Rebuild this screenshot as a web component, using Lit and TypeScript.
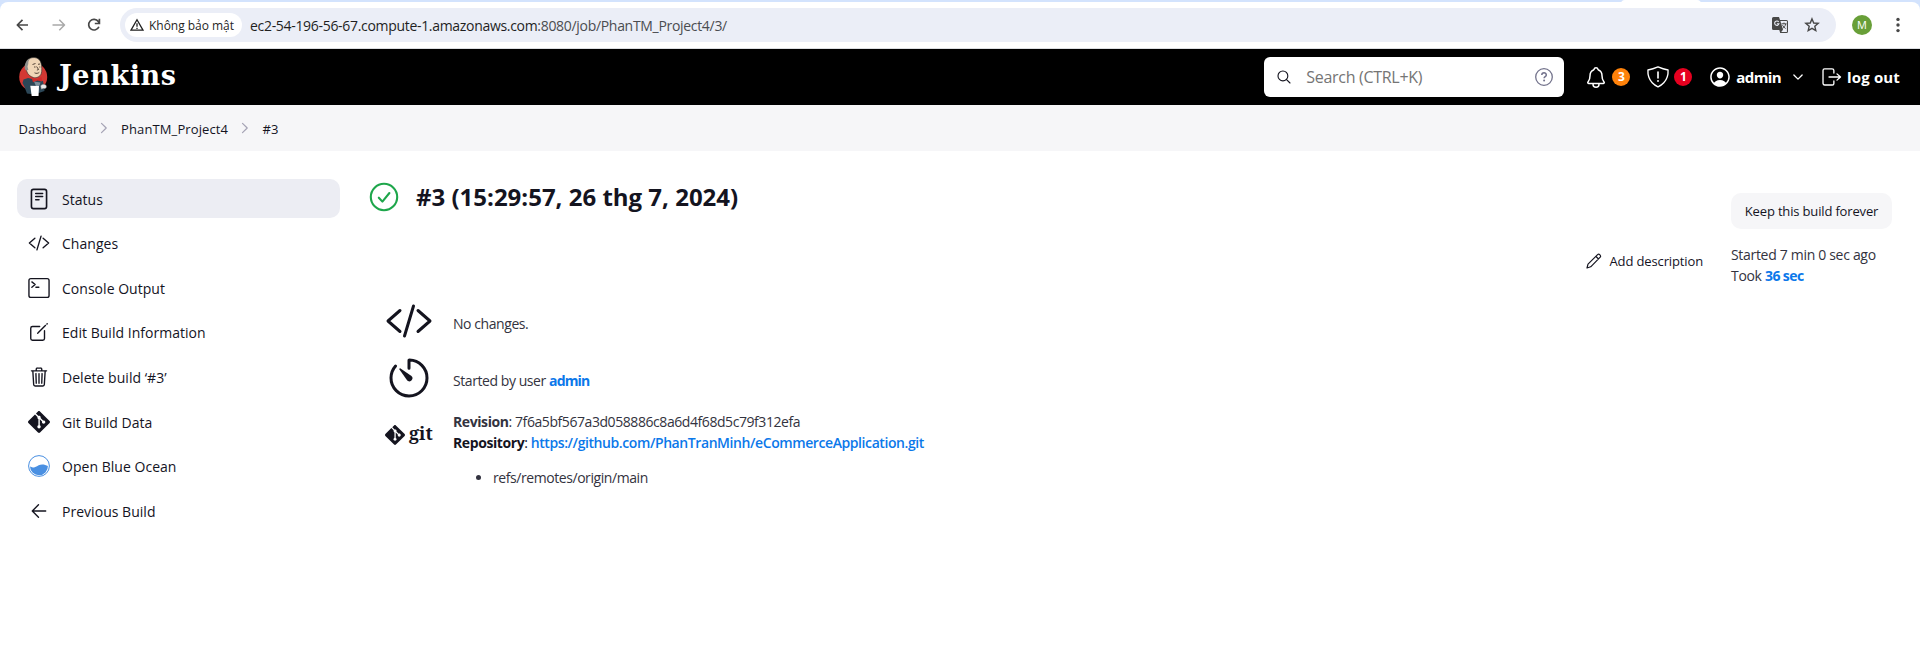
import { LitElement, html, css, svg, type TemplateResult } from "lit";
import { customElement } from "lit/decorators.js";
import { classMap } from "lit/directives/class-map.js";

const line = (body: TemplateResult, width = 32) => svg`
  <g fill="none" stroke="currentColor" stroke-width=${width} stroke-linecap="round" stroke-linejoin="round">${body}</g>`;

const ion = (cls: string, body: unknown) =>
  html`<svg class=${cls} viewBox="0 0 512 512">${body}</svg>`;

const slash = svg`<path d="M160 368L32 256l128-112M352 368l128-112-128-112M304 96l-96 320"/>`;
const gitMark = svg`<path fill="currentColor" d="M23.546 10.93L13.067.452c-.604-.603-1.582-.603-2.188 0L8.708 2.627l2.76 2.76c.645-.215 1.379-.07 1.889.441.516.515.658 1.258.438 1.9l2.658 2.66c.645-.223 1.387-.078 1.9.435.721.72.721 1.884 0 2.604-.719.719-1.881.719-2.6 0-.539-.541-.674-1.337-.404-1.996L12.86 8.955v6.525c.176.086.342.203.488.348.713.721.713 1.883 0 2.6-.719.721-1.889.721-2.609 0-.719-.719-.719-1.879 0-2.598.182-.18.387-.316.605-.406V8.835c-.217-.091-.424-.222-.6-.401-.545-.545-.676-1.342-.396-2.009L7.636 3.7.45 10.881c-.6.605-.6 1.584 0 2.189l10.48 10.477c.604.604 1.582.604 2.186 0l10.43-10.43c.605-.603.605-1.582 0-2.187"/>`;

const tasks: { label: string; icon: TemplateResult; active?: boolean }[] = [
  {
    label: "Status",
    active: true,
    icon: ion("ti", line(svg`<rect x="80" y="32" width="352" height="448" rx="48" stroke-width="38"/><path d="M180 128h160M180 200h160M180 272h76" stroke-width="36"/>`)),
  },
  { label: "Changes", icon: ion("ti", line(slash)) },
  {
    label: "Console Output",
    icon: ion("ti", line(svg`<rect x="22" y="38" width="468" height="436" rx="44"/><path d="M90 114l76 62-76 62M184 238h68"/>`)),
  },
  {
    label: "Edit Build Information",
    icon: ion("ti", svg`${line(svg`<path d="M384 224v184a40 40 0 01-40 40H104a40 40 0 01-40-40V168a40 40 0 0140-40h167.48"/>`)}<path fill="currentColor" d="M459.94 53.25a16.06 16.06 0 00-23.22-.56L424.35 65a8 8 0 000 11.31l11.34 11.32a8 8 0 0011.34 0l12.06-12c6.1-6.09 6.67-16.01.85-22.38zM399.34 90L218.82 270.2a9 9 0 00-2.31 3.93L208.16 299a3.91 3.91 0 004.86 4.86l24.85-8.35a9 9 0 003.93-2.31L422 112.66a9 9 0 000-12.66l-9.95-10a9 9 0 00-12.71 0z"/>`),
  },
  {
    label: "Delete build ‘#3’",
    icon: ion("ti", line(svg`<path d="M112 112l20 320c.95 18.49 14.4 32 32 32h184c17.67 0 30.87-13.51 32-32l20-320M80 112h352M192 112V72a23.93 23.93 0 0124-24h80a23.93 23.93 0 0124 24v40M256 176v224M184 176l8 224M328 176l-8 224"/>`)),
  },
  { label: "Git Build Data", icon: html`<svg class="ti" viewBox="0 0 24 24">${gitMark}</svg>` },
  {
    label: "Open Blue Ocean",
    icon: html`<svg class="ti" viewBox="0 0 22 22"><circle cx="11" cy="11" r="10.4" fill="#fff" stroke="#4a90e2" stroke-width="1"/><path fill="#4a90e2" d="M2 11.6c1.6 1 3.400 1.100 5.200.3 2.600-1.100 4.300-2.500 7-2.500 2.100 0 4 .7 5.700 1.700a8.950 8.950 0 0 1-17.900.5z"/></svg>`,
  },
  { label: "Previous Build", icon: ion("ti", line(svg`<path d="M244 400L100 256l144-144M120 256h292"/>`)) },
];

@customElement("app-root")
export class AppRoot extends LitElement {
  static styles = css`
    :host {
      display: block;
      height: 646px;
      overflow: hidden;
      background: #fff;
      color: #14141f;
      font: 14px/21px "Open Sans", "Noto Sans", sans-serif;
    }
    * { box-sizing: border-box; }
    svg { display: block; flex: none; overflow: visible; }

    .strip { height: 49px; background: #d3e3fd; display: grid; }
    .strip > * { grid-area: 1 / 1; }
    .tab { justify-self: end; width: 80px; height: 4px; margin-right: 219px; background: #fff; border-radius: 6px 6px 0 0; }
    .toolbar {
      margin-top: 2px; background: #fff; border-radius: 8px 8px 0 0; border-bottom: 1px solid #dcdee2;
      display: flex; align-items: center; padding: 0 20px 0 15px; color: #474747;
    }
    .nav { width: 16px; height: 16px; margin-right: 20px; }
    .nav.off { color: #a9a9a9; margin-right: 19px; }
    .nav.re { margin-right: 18px; }
    .url {
      flex: 1; height: 34px; border-radius: 17px; background: #ebeef7; margin: 0 16px 0 0;
      display: flex; align-items: center; padding: 0 16px 0 5px; font-size: 14px; letter-spacing: -0.31px; color: #4a4c50;
    }
    .chip {
      display: flex; align-items: center; height: 24px; width: 117px; padding-left: 5px; margin-right: 8px; border-radius: 12px;
      background: #fff; color: #1f1f1f; font-size: 12px; font-weight: 500; letter-spacing: -0.03px; white-space: nowrap;
    }
    .chip svg { width: 14px; height: 14px; margin-right: 5px; }
    .host { color: #1f1f1f; }
    .grow { flex: 1; }
    .translate { margin-right: 16px; }
    .avatar { width: 20px; height: 20px; border-radius: 50%; background: #689f38; color: #fff; font-size: 11px; line-height: 20px; text-align: center; margin-right: 24px; }

    header { height: 56px; background: #000; color: #fff; display: flex; align-items: center; padding: 0 20px 0 18px; font-size: 16px; font-weight: 600; }
    .butler { width: 30px; height: 40px; margin-right: 11px; }
    .brand { font: 700 27px/30px "DejaVu Serif", serif; letter-spacing: 0.6px; margin-top: -2px; }
    .search { width: 300px; height: 40px; border-radius: 6px; background: #fff; display: flex; align-items: center; padding: 0 11px 0 12px; margin-right: 22px; color: #14141f; }
    .search span { flex: 1; padding-left: 14px; color: #757575; font-weight: 400; letter-spacing: -0.3px; }
    .ic16 { width: 16px; height: 16px; }
    .ic18 { width: 18px; height: 18px; }
    .ic20 { width: 20px; height: 20px; }
    .ic22 { width: 22px; height: 22px; }
    .num { width: 18px; height: 18px; border-radius: 50%; font-size: 12px; line-height: 18px; text-align: center; font-weight: 700; }
    .orange { background: #ff820a; margin: 0 17px 0 6px; }
    .red { background: #e6001f; margin: 0 18px 0 5px; }
    .user { margin: 0 11px 0 6px; letter-spacing: -0.6px; font-size: 15px; font-weight: 700; }
    .out { margin-left: 5px; letter-spacing: 0.15px; font-size: 15px; font-weight: 700; }
    .down { width: 12px; height: 12px; margin-right: 18px; }

    .crumbs { height: 46px; background: #f6f6f8; display: flex; align-items: center; padding: 2px 0 0 18.500px; font-size: 13px; letter-spacing: 0.11px; }
    .crumbs svg { width: 12px; height: 12px; color: #a5a3b5; margin: -3px 11.500px 0 11px; }

    .page { display: grid; grid-template-columns: 323px 1fr; column-gap: 29px; padding: 28px 28px 0 17px; }
    nav { display: flex; flex-direction: column; gap: 5.65px; }
    .task { height: 39px; border-radius: 10px; display: flex; align-items: center; padding-left: 11px; font-weight: 500; letter-spacing: 0.03px; }
    .task.active { background: #ecedf3; }
    .ti { width: 22px; height: 22px; margin-right: 12px; }
    .task span { padding-top: 1px; }

    .build { display: grid; grid-template-columns: 1fr auto 161px; letter-spacing: -0.43px; }
    h1 { display: flex; align-items: center; height: 37px; margin: 0 0 81px; font-size: 24px; line-height: 32px; font-weight: 700; letter-spacing: 0; }
    h1 svg { width: 30px; height: 30px; margin-right: 17px; margin-top: -2px; }
    h1 span { margin-top: -1px; }
    .row { display: grid; grid-template-columns: 50px 1fr; column-gap: 19px; margin-left: 15px; }
    .row > svg { width: 48px; height: 48px; margin-left: 1px; }
    .changes { height: 64px; padding-top: 8px; }
    .changes > svg { margin-top: -8px; }
    .cause { height: 50px; }
    .cause > svg { margin-top: -7px; }
    .changes p { margin: 8px 0 0; }
    .cause p { margin: 9px 0 0; }
    .light { color: #333340; }
    b { font-weight: 700; letter-spacing: -0.41px; }
    a { color: #0b78ea; text-decoration: none; font-weight: 700; letter-spacing: -0.85px; }
    .meta a { letter-spacing: -0.6px; }
    a.repo { font-weight: 600; letter-spacing: -0.415px; }
    .gitlogo { display: flex; align-items: center; height: 22px; margin-top: 13px; font: 700 18px/22px "Noto Serif", "DejaVu Serif", serif; letter-spacing: 0; padding-left: 1px; }
    .gitlogo svg { width: 20px; height: 20px; margin-right: 4px; }
    .gitlogo span { margin-top: -4px; }
    ul { margin: 14px 0 0; padding-left: 40px; }

    .add { display: flex; align-items: center; height: 20px; margin: 72px 28px 0 0; font-size: 13px; font-weight: 500; letter-spacing: -0.13px; }
    .add svg { margin-right: 8px; }
    .keep { height: 36px; margin: 14px 0 15px; border-radius: 10px; background: #f6f6f8; font-size: 13px; line-height: 36px; text-align: center; font-weight: 500; letter-spacing: -0.16px; }
    .meta { letter-spacing: -0.31px; }
  `;

  private chrome() {
    return html`<div class="strip">
      <div class="toolbar">
        <svg class="nav" viewBox="0 0 16 16">${line(svg`<path d="M13 8H2.500M7.500 2.800L2.300 8l5.200 5.200" stroke-linecap="butt"/>`, 1.7)}</svg>
        <svg class="nav off" viewBox="0 0 16 16">${line(svg`<path d="M1.500 8H13M8.300 2.800L13.500 8l-5.200 5.200" stroke-linecap="butt"/>`, 1.5)}</svg>
        <svg class="nav re" viewBox="0 0 16 16"><path d="M12.900 9.700A5.300 5.300 0 1 1 12.300 4.600L13.300 6.200M13.400 1.800v4.700H8.800" fill="none" stroke="currentColor" stroke-width="1.700"/></svg>
        <div class="url">
          <div class="chip">
            <svg viewBox="0 0 14 14"><path d="M7 1.700L13 12.200H1z" fill="none" stroke="#1f1f1f" stroke-width="1.300"/><path d="M7 5.300v3.500M7 9.700v1.300" stroke="#1f1f1f" stroke-width="1.300"/></svg>Không bảo mật
          </div>
          <span class="host">ec2-54-196-56-67.compute-1.amazonaws.com</span>:8080/job/PhanTM_Project4/3/
          <div class="grow"></div>
          <svg class="ic16 translate" viewBox="0 0 16 16">
            <path fill="#474747" d="M1.500 0H7l1 3h6.500A1.500 1.500 0 0 1 16 4.500v10a1.500 1.500 0 0 1-1.500 1.500H8.200L7.300 13H1.500A1.500 1.500 0 0 1 0 11.500v-10A1.500 1.500 0 0 1 1.500 0z"/>
            <path fill="#ebeef7" d="M8.400 4.100h6.500v10.800H9.200l1.800-2.100z"/>
            <path d="M6.700 4.900A2.200 2.200 0 1 0 7 6.700H4.900" fill="none" stroke="#ebeef7" stroke-width="1.100"/>
            <path d="M9.500 6.800h5M12 5.600v1.200M13.700 7c-.3 1.800-1.600 3.400-3.200 4.400M10.500 8.200c.6 1.300 1.700 2.500 3.100 3.300" fill="none" stroke="#474747"/>
          </svg>
          <svg class="ic16" viewBox="0 0 16 16"><path d="M8 1.900l1.750 4.100 4.450.4-3.400 2.900 1 4.350L8 11.350 4.200 13.650l1-4.350-3.400-2.900 4.450-.4z" fill="none" stroke="#474747" stroke-width="1.400"/></svg>
        </div>
        <div class="avatar">M</div>
        <svg width="4" height="16" viewBox="0 0 4 16" fill="currentColor"><circle cx="2" cy="2.400" r="1.700"/><circle cx="2" cy="8" r="1.700"/><circle cx="2" cy="13.600" r="1.700"/></svg>
      </div>
      <div class="tab"></div>
    </div>`;
  }

  private butler() {
    return html`<svg class="butler" viewBox="0 0 30 40">
      <ellipse cx="15.200" cy="20" rx="14" ry="14.300" fill="#d33833"/>
      <path d="M5.500 22.500l4.500-1.500 9.500 2 5.500 1 1.500 10-10 3.500L9 36.500 6.500 30 4.500 26z" fill="#2c4757"/>
      <path d="M9 15C7 10 7 4 11 1.700c5-2.400 10.500-1 12 4.300.8 3 1.200 8 .2 10.800-1.200 3-4.800 4.500-7.800 3.700C12.200 19.600 10 17.500 9 15z" fill="#f0d6b7" stroke="#2b2b2b" stroke-width=".6"/>
      <path d="M8.200 13.500C5.500 12.500 6 3.500 12.500 1.500c-2 1.800-2.300 3.200-2.200 5.400L9.500 9.500l.8 3.500z" fill="#8f8f8c"/>
      <path d="M14.500 7.500l3-1M20 7.300l2-.3M18.600 9.500l2 3-1.700.6M16.500 15.800c1.800 1 3.600.6 4.800-.5M16 10h1.500M21.300 10h1" fill="none" stroke="#44352b" stroke-width=".9"/>
      <path d="M13.500 20.500l5 1.800 5-2.300.5 4.500-4.500-1-4.500 1.700z" fill="#d02a2a"/>
      <path d="M16 24.500l3 .5 3.500.5-1 3-3 2z" fill="#7b8f9b"/>
      <path d="M12.300 28.800l8.700.3-.5 10-6.800-.2z" fill="#fff"/>
      <path d="M22.500 29c1-2.500 5.500-2.500 6 .2.300 1.800-1.500 3-3 2.300l-2.200.8z" fill="#e8e8e8" stroke="#555" stroke-width=".5"/>
    </svg>`;
  }

  private header() {
    return html`<header>
      ${this.butler()}
      <div class="brand">Jenkins</div>
      <div class="grow"></div>
      <div class="search">
        ${ion("ic16", line(svg`<path d="M221.090 64a157.090 157.090 0 10157.090 157.090A157.100 157.100 0 00221.090 64zM338.290 338.290L448 448"/>`, 36))}
        <span>Search (CTRL+K)</span>
        <svg class="ic18" viewBox="0 0 18 18"><circle cx="9" cy="9" r="8.300" fill="none" stroke="#73738c" stroke-width="1.300"/><path d="M6.800 7.100c0-3 4.500-2.900 4.500-.2 0 1.700-2.200 1.600-2.200 3.300" fill="none" stroke="#73738c" stroke-width="1.500"/><circle cx="9.100" cy="12.600" r="1" fill="#73738c"/></svg>
      </div>
      ${ion("ic20", line(svg`<path d="M427.680 351.430C402 320 383.870 304 383.870 217.350 383.870 138 343.350 109.730 310 96c-4.430-1.820-8.600-6-9.950-10.550C294.200 65.540 277.800 48 256 48s-38.210 17.550-44 37.470c-1.350 4.600-5.520 8.710-9.950 10.530-33.390 13.750-73.870 41.920-73.870 121.350C128.130 304 110 320 84.320 351.430 73.680 364.450 83 384 101.610 384h308.880c18.510 0 27.770-19.610 17.190-32.570zM320 384v16a64 64 0 01-128 0v-16" transform="translate(-51 -38) scale(1.200)"/>`))}
      <div class="num orange">3</div>
      ${ion("ic22", line(svg`<path d="M490 92C395 76 346 60 256 20 166 60 117 76 22 92 4 380 238 476 256 484c18-8 252-104 234-392z"/><path d="M256 140v140" stroke-width="38"/><path d="M256 346v4" stroke-width="44"/>`))}
      <div class="num red">1</div>
      ${ion("ic20", svg`<g fill="currentColor" transform="translate(-53 -53) scale(1.207)"><path d="M258.900 48C141.920 46.420 46.420 141.920 48 258.900c1.560 112.190 92.910 203.540 205.100 205.100 117 1.600 212.480-93.900 210.880-210.880C462.440 140.910 371.090 49.560 258.900 48zm126.420 327.250a4 4 0 01-6.140-.32 124.270 124.270 0 00-32.350-29.590C321.370 329 289.110 320 256 320s-65.370 9-90.830 25.340a124.240 124.240 0 00-32.350 29.580 4 4 0 01-6.140.32A175.320 175.320 0 0180 259c-1.630-97.310 78.220-178.760 175.570-179S432 158.810 432 256a175.320 175.320 0 01-46.680 119.250z"/><path d="M256 144c-19.720 0-37.550 7.390-50.220 20.820s-19 32-17.570 51.930C191.110 256 221.520 288 256 288s64.830-32 67.790-71.240c1.480-19.740-4.800-38.140-17.680-51.820C293.390 151.440 275.590 144 256 144z"/></g>`)}
      <span class="user">admin</span>
      ${ion("down", line(svg`<path d="M80 170l176 176 176-176"/>`, 56))}
      ${ion("ic20", line(svg`<path d="M304 356v64a40 40 0 01-40 40H70a44 44 0 01-44-40V90a40 40 0 0140-40h190c22 0 48 18 48 40v64M384 336l90-80-90-80M180 256h280" stroke-width="34"/>`))}
      <span class="out">log out</span>
    </header>`;
  }

  render() {
    const chevron = ion("", line(svg`<path d="M150 60l200 196-200 196"/>`, 52));
    return html`
      ${this.chrome()} ${this.header()}
      <div class="crumbs">Dashboard ${chevron} PhanTM_Project4 ${chevron} #3</div>
      <div class="page">
        <nav>
          ${tasks.map((t) => html`<div class=${classMap({ task: true, active: !!t.active })}>${t.icon}<span>${t.label}</span></div>`)}
        </nav>
        <div class="build">
          <main>
            <h1>
              <svg viewBox="0 0 30 30"><circle cx="15" cy="15" r="13.200" fill="none" stroke="#1ea64b" stroke-width="2.100"/><path d="M9.800 15.700l3.600 3.900 7-8.600" fill="none" stroke="#1ea64b" stroke-width="2.100" stroke-linecap="round" stroke-linejoin="round"/></svg>
              <span>#3 (15:29:57, 26 thg 7, 2024)</span>
            </h1>
            <div class="row changes">
              ${ion("", line(slash))}
              <p class="light">No changes.</p>
            </div>
            <div class="row cause">
              ${ion("", svg`${line(svg`<path d="M112.910 128A191.850 191.850 0 0064 254c-1.180 106.350 85.650 193.800 192 194 106.200.2 192-85.830 192-192 0-104.540-83.550-189.610-187.500-192a4.360 4.360 0 00-4.500 4.370V152"/>`)}<path fill="currentColor" d="M233.380 278.630l-79-113a8.130 8.130 0 0111.320-11.320l113 79a32.500 32.500 0 01-37.250 53.260 33.210 33.210 0 01-8.070-7.940z"/>`)}
              <p class="light">Started by user <a>admin</a></p>
            </div>
            <div class="row">
              <div class="gitlogo"><svg viewBox="0 0 24 24">${gitMark}</svg><span>git</span></div>
              <div>
                <div class="light"><b>Revision</b>: 7f6a5bf567a3d058886c8a6d4f68d5c79f312efa</div>
                <div><b>Repository</b>: <a class="repo">https://github.com/PhanTranMinh/eCommerceApplication.git</a></div>
                <ul><li class="light">refs/remotes/origin/main</li></ul>
              </div>
            </div>
          </main>
          <div class="add">
            <svg class="ic16" viewBox="0 0 16 16"><path d="M1 15l1-3.800L11.600 1.600q1.100-1 2.300.2t.3 2.400L4.700 13.800zM10 3.500l2.500 2.500" fill="none" stroke="currentColor" stroke-width="1.200" stroke-linejoin="round"/></svg>Add description
          </div>
          <aside>
            <div class="keep">Keep this build forever</div>
            <div class="meta light">Started 7 min 0 sec ago<br />Took <a>36 sec</a></div>
          </aside>
        </div>
      </div>
    `;
  }
}
